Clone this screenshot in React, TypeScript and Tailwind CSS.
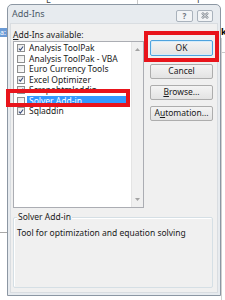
import React from "react";

const ITEMS = [
  { name: "Analysis ToolPak", checked: true },
  { name: "Analysis ToolPak - VBA", checked: false },
  { name: "Euro Currency Tools", checked: false },
  { name: "Excel Optimizer", checked: true },
  { name: "Scrapehtmladdin", checked: true },
  { name: "Solver Add-in", checked: false, selected: true },
  { name: "Sqladdin", checked: true },
];

function Check({ on }: { on: boolean }) {
  return (
    <span className="w-[8px] h-[8px] shrink-0 border border-[#8e8f8f] bg-gradient-to-br from-[#e6e6e6] to-white flex items-center justify-center">
      {on && (
        <svg width="7" height="7" viewBox="0 0 7 7">
          <path d="M1 3.6 L2.8 5.4 L6 1.2" fill="none" stroke="#3b4f7e" strokeWidth="1.3" />
        </svg>
      )}
    </span>
  );
}

function Btn({ children, ok }: { children: React.ReactNode; ok?: boolean }) {
  return (
    <div
      className={
        "w-[63px] flex items-center justify-center rounded-[2px] border bg-gradient-to-b from-[#f4f4f4] to-[#e3e3e3] text-[8.5px] text-[#1a1a1a] " +
        (ok ? "h-[16px] border-[#4fa3de] shadow-[inset_0_0_0_1px_#d6ecfa]" : "h-[15px] border-[#adadad]")
      }
    >
      {children}
    </div>
  );
}

export default function App() {
  return (
    <div
      className="relative w-[225px] h-[300px] bg-white overflow-hidden"
      style={{ fontFamily: '"Noto Sans", "Open Sans", sans-serif' }}
    >
      {/* spreadsheet behind */}
      <div className="absolute left-[46px] top-[-7px] text-[9px] text-[#444]">E</div>
      <div className="absolute left-[197px] top-[-7px] text-[9px] text-[#444]">F</div>
      <div className="absolute left-[137px] top-0 w-px h-[4px] bg-[#c8c8c8]" />
      <div className="absolute left-0 top-[28px] w-[7px] h-[9px] bg-[#6b9bd6] text-[7px] leading-[9px] text-white">a:</div>
      <div className="absolute left-0 top-[232px] w-[7px] h-px bg-[#a8a8a8]" />
      <div className="absolute left-[221px] top-[27px] text-[9px] font-bold text-black leading-[10px]">k</div>
      <div className="absolute left-[221px] top-[52px] w-[4px] h-px bg-[#c8c8c8]" />
      <div className="absolute left-[221px] top-[38px] w-px h-[262px] bg-[#d0d0d0]" />

      {/* dialog window */}
      <div className="absolute left-[7px] top-[4px] w-[214px] h-[292px] rounded-t-[5px] border border-[#8c97a3] bg-[#e7ebef] flex flex-col">
        <div className="h-[18px] flex items-center justify-between pl-[4px] pr-[7px]">
          <span className="text-[9px] text-[#4c5a68]">Add-Ins</span>
          <div className="flex gap-[4px] mt-[3px]">
            <div className="w-[17px] h-[12px] rounded-[2px] border border-[#a9b2bc] bg-[#f2f4f6] flex items-center justify-center text-[8px] font-bold text-[#6f7680] leading-none">
              ?
            </div>
            <div className="w-[16px] h-[12px] rounded-[2px] border border-[#a9b2bc] bg-[#f2f4f6] flex items-center justify-center">
              <svg width="8" height="7" viewBox="0 0 8 7">
                <path d="M1 0.8 L7 6.2 M7 0.8 L1 6.2" stroke="#8a9098" strokeWidth="2.4" />
                <path d="M1 0.8 L7 6.2 M7 0.8 L1 6.2" stroke="#eef0f2" strokeWidth="0.8" />
              </svg>
            </div>
          </div>
        </div>

        <div className="mx-[2px] flex-1 bg-[#f0f0f0] border border-[#d9dde1] mb-[2px] flex flex-col">
          <div className="flex">
            {/* left column */}
            <div className="ml-[2px] w-[131px] pt-[5px]">
              <div className="h-[11px] leading-[11px] text-[8.5px] text-[#1a1a1a]">
                <span className="underline">A</span>dd-Ins available:
              </div>
              <div className="mt-[1px] h-[167px] border border-[#abadb3] bg-white flex">
                <div className="flex-1 pt-px pl-[3px] pr-[1px]">
                  {ITEMS.map((it) => (
                    <div key={it.name} className="h-[10.5px] flex items-center">
                      <Check on={it.checked} />
                      <span
                        className={
                          "flex-1 ml-[2px] pl-[2px] h-[10.5px] leading-[10.5px] text-[8.5px] whitespace-nowrap " +
                          (it.selected ? "bg-[#3399ff] text-white" : "text-[#1a1a1a]")
                        }
                      >
                        {it.name}
                      </span>
                    </div>
                  ))}
                </div>
                <div className="w-[12px] bg-[#f0f0f0] border-l border-[#e4e4e4] flex flex-col items-center justify-between py-[6px]">
                  <svg width="5" height="3" viewBox="0 0 5 3">
                    <path d="M0 3 L2.5 0 L5 3 Z" fill="#a3a3a3" />
                  </svg>
                  <svg width="5" height="3" viewBox="0 0 5 3">
                    <path d="M0 0 L2.5 3 L5 0 Z" fill="#a3a3a3" />
                  </svg>
                </div>
              </div>
            </div>

            {/* buttons */}
            <div className="ml-[6px] pt-[16px] flex flex-col">
              <Btn ok>OK</Btn>
              <div className="h-[8px]" />
              <Btn>Cancel</Btn>
              <div className="h-[6px]" />
              <Btn>
                <span className="underline">B</span>rowse...
              </Btn>
              <div className="h-[6px]" />
              <Btn>
                A<span className="underline">u</span>tomation...
              </Btn>
            </div>
          </div>

          {/* description group */}
          <div className="relative ml-[2px] mt-[9px] w-[200px] h-[71px] rounded-[2px] border border-[#d5dfe5] shadow-[inset_1px_1px_0_#ffffff]">
            <span className="absolute left-[3px] top-[-7px] px-px bg-[#f0f0f0] text-[8.5px] leading-[12px] text-[#1a1a1a]">
              Solver Add-in
            </span>
            <div className="pl-[3px] pt-[9px] text-[8.5px] leading-[12px] text-[#1a1a1a]">
              Tool for optimization and equation solving
            </div>
          </div>
        </div>
      </div>

      {/* red annotation boxes */}
      <div className="absolute left-[144px] top-[31px] w-[75px] h-[31px] border-[4px] border-[#e8141b]" />
      <div className="absolute left-[6px] top-[89px] w-[124px] h-[18px] border-[4px] border-[#e8141b]" />
    </div>
  );
}
